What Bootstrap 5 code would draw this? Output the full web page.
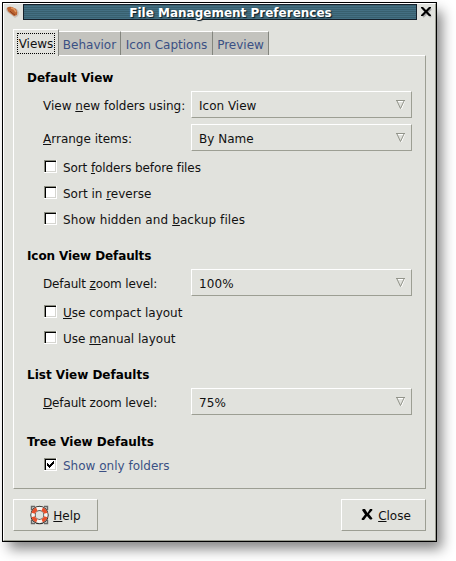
<!DOCTYPE html>
<html lang="en">
<head>
<meta charset="utf-8">
<meta name="viewport" content="width=device-width, initial-scale=1">
<title>File Management Preferences</title>
<link href="https://cdn.jsdelivr.net/npm/bootstrap@5.3.0/dist/css/bootstrap.min.css" rel="stylesheet">
<style>
body{font:12px/16px "DejaVu Sans",sans-serif;color:#111;background:#fff;height:561px;padding:2px 0 0 2px;overflow:hidden}
.win{width:435px;height:540px;background:#e1e2dd;border:1px solid #000;box-shadow:6px 8px 12px -1px rgba(0,0,0,.48)}
.win-in{height:538px;border:1px solid;border-color:#fff #9c9e93 #9c9e93 #fff}
.titlebar{height:16px}
.title-ico{width:19px;height:16px}
.caption-bar{width:394px;height:16px;line-height:16px;color:#fff;border:1px solid #14202b;background:repeating-linear-gradient(#38606f 0 1px,#436f82 1px 2px);text-shadow:1px 1px 1px #0b1b26;padding-left:21px}
.caption-bar span{display:block}
.tabs{height:26px;margin:9px 0 0 9px}
.tabs .nav-link{padding:0;border:0;border-radius:0;height:24px;background:#c3c3be;color:#3a5084;border-top:1px solid #fff;border-right:1px solid #84867f;text-align:center;line-height:27px;white-space:nowrap}
.tabs .nav-link.active{height:27px;margin-bottom:-1px;background:#e1e2dd;color:#111;border-left:1px solid #fff;padding:3px 3px 0 3px;position:relative}
.focus-box{display:block;border:1px dotted #000;height:21px;line-height:20px;width:38px}
.w1{width:46px}.w2{width:62px}.w3{width:92px}.w4{width:56px}
.page{width:413px;height:434px;margin-left:9px;border:1px solid;border-color:#fff #9c9e93 #9c9e93 #fff;padding:12px 13px 0}
.head{font-size:12px;line-height:20px;font-weight:700;margin:0 0 3px;color:#000}
.head.gap{margin-top:13px}
.head.last{margin:17px 0 1px}
.opt{height:27px;padding-left:16px}
.opt + .opt{margin-top:6px}
.opt label{width:148px;padding-top:2px;white-space:nowrap}
.combo{width:221px;height:27px;border:1px solid;border-color:#fff #9c9e93 #9c9e93 #fff;padding:2px 6px 0 7px}
.combo svg{margin-top:-1px}
.chk{height:26px;padding-left:17px}
.opt + .chk{margin-top:4px}
.chk svg{margin:-3px 6px 0 0;flex:none}
.tight{letter-spacing:-.1px}
.tighter{letter-spacing:-.14px}
.loose{letter-spacing:.1px}
u{text-decoration-thickness:1px;text-underline-offset:1px;text-decoration-skip-ink:none}
.blue{color:#3a5084}
.foot{margin:10px 9px 0 9px;width:413px}
.foot .btn{font-size:12px;line-height:16px;color:#111;width:85px;height:32px;padding:0;border-radius:0;border:1px solid;border-color:#fff #9c9e93 #9c9e93 #fff}
.foot span{padding-top:2px}
.foot .nudge{padding-left:4px}
</style>
</head>
<body>
<svg width="0" height="0" class="position-absolute">
<defs>
<symbol id="box" viewBox="0 0 13 13"><path fill="#fff" d="M0 0h13v13H0z"/><path fill="#8a8c80" d="M0 0h12v1H1v11H0z"/><path d="M1 1h11v1H2v10H1z"/><path fill="#d5d5d0" d="M11 2h1v10H2v-1h9z"/></symbol>
<symbol id="arrow" viewBox="0 0 9 10"><path d="M1.5 1.5H8.500L5.500 9" fill="none" stroke="#fff"/><path d="M0 .5h9M1 1l3.500 7.500L8 1" fill="none" stroke="#92948a"/></symbol>
</defs>
</svg>
<main class="win"><div class="win-in">
<header class="titlebar d-flex">
<div class="title-ico"><svg class="d-block" width="19" height="16" viewBox="0 0 19 16"><path d="M2 5q1-3 5-2l6 2q3 3 1 7l-3 2-5-4q-4-2-4-5z" fill="#c9c0b8"/><path d="M3 4q2-2 5-1l4 2q2 3 1 6l-3 1-4-3q-3-2-3-5z" fill="#bd632f"/><path d="M7 4l3 1 2 3" fill="none" stroke="#e19a62" stroke-width="1.500"/><path d="M6 7l2 2 3 2" fill="none" stroke="#8a4020"/></svg></div>
<div class="caption-bar text-center fw-bold"><span>File Management Preferences</span></div>
<svg width="18" height="17" viewBox="0 0 18 17"><path d="M5 4l8 8M13 4l-8 8" stroke="#aaa" stroke-width="2" transform="translate(1 1)"/><path d="M4 3h2l3 3 3-3h2v1l-3.500 3.500L14 11v1h-2L9 9l-3 3H4v-1l3.500-3.500L4 4z"/></svg>
</header>
<nav class="tabs nav d-flex align-items-end">
<a class="nav-link active w1"><span class="focus-box">Views</span></a><a class="nav-link w2">Behavior</a><a class="nav-link w3">Icon Captions</a><a class="nav-link w4">Preview</a>
</nav>
<section class="page">
<h2 class="head">Default View</h2>
<div class="opt d-flex align-items-center"><label>View <u>n</u>ew folders using:</label><div class="combo d-flex align-items-center justify-content-between"><span>Icon View</span><svg width="9" height="10"><use href="#arrow"/></svg></div></div>
<div class="opt d-flex align-items-center"><label><u>A</u>rrange items:</label><div class="combo d-flex align-items-center justify-content-between"><span>By Name</span><svg width="9" height="10"><use href="#arrow"/></svg></div></div>
<div class="chk d-flex align-items-center"><svg width="13" height="13"><use href="#box"/></svg><span class="tight">Sort <u>f</u>olders before files</span></div>
<div class="chk d-flex align-items-center"><svg width="13" height="13"><use href="#box"/></svg><span>Sort in <u>r</u>everse</span></div>
<div class="chk d-flex align-items-center"><svg width="13" height="13"><use href="#box"/></svg><span class="loose">Show hidden and <u>b</u>ackup files</span></div>
<h2 class="head gap tight">Icon View Defaults</h2>
<div class="opt d-flex align-items-center"><label class="tighter">Default <u>z</u>oom level:</label><div class="combo d-flex align-items-center justify-content-between"><span class="loose">100%</span><svg width="9" height="10"><use href="#arrow"/></svg></div></div>
<div class="chk d-flex align-items-center"><svg width="13" height="13"><use href="#box"/></svg><span><u>U</u>se compact layout</span></div>
<div class="chk d-flex align-items-center"><svg width="13" height="13"><use href="#box"/></svg><span>Use <u>m</u>anual layout</span></div>
<h2 class="head gap">List View Defaults</h2>
<div class="opt d-flex align-items-center"><label class="tighter"><u>D</u>efault zoom level:</label><div class="combo d-flex align-items-center justify-content-between"><span class="loose">75%</span><svg width="9" height="10"><use href="#arrow"/></svg></div></div>
<h2 class="head last">Tree View Defaults</h2>
<div class="chk d-flex align-items-center blue"><svg width="13" height="13" viewBox="0 0 13 13"><use href="#box"/><path d="M3 5h1v1h1v1h1V6h1V5h1V4h1V3h1v3H9v1H8v1H7v1H6v1H5V9H4V8H3z" fill="#000"/></svg><span>Show <u>o</u>nly folders</span></div>
</section>
<footer class="foot d-flex justify-content-between">
<button class="btn d-flex align-items-center justify-content-center"><svg class="me-1" width="19" height="20" viewBox="0 0 19 20"><path d="M1.500 5V1.500H5M14 1.500h3.500V5M1.500 15v3.500H5M14 18.500h3.500V15" fill="none" stroke="#666" stroke-width="1.400"/><circle cx="9.500" cy="10" r="6.600" fill="none" stroke="#2e2e2c" stroke-width="5.200"/><circle cx="9.500" cy="10" r="6.500" fill="none" stroke="#f6f4f1" stroke-width="3.600"/><path d="M3.200 8.300A6.500 6.500 0 0 1 6.800 4.100M12.200 4.100A6.500 6.500 0 0 1 15.800 8.300M15.800 11.700A6.500 6.500 0 0 1 12.200 15.900M6.800 15.900A6.500 6.500 0 0 1 3.200 11.700" fill="none" stroke="#e8502a" stroke-width="3.600"/></svg><span><u>H</u>elp</span></button>
<button class="btn d-flex align-items-center justify-content-center nudge"><svg class="me-1" width="14" height="14" viewBox="0 0 14 14"><path d="M3 1h2l2.500 4L10 1h2l.5 1L9 6l3.500 4.500-1 1H10L7 8l-3 4H2l-.5-1L5 6.500 2 2z"/></svg><span><u>C</u>lose</span></button>
</footer>
</div></main>
<script src="https://cdn.jsdelivr.net/npm/bootstrap@5.3.0/dist/js/bootstrap.bundle.min.js"></script>
</body>
</html>
